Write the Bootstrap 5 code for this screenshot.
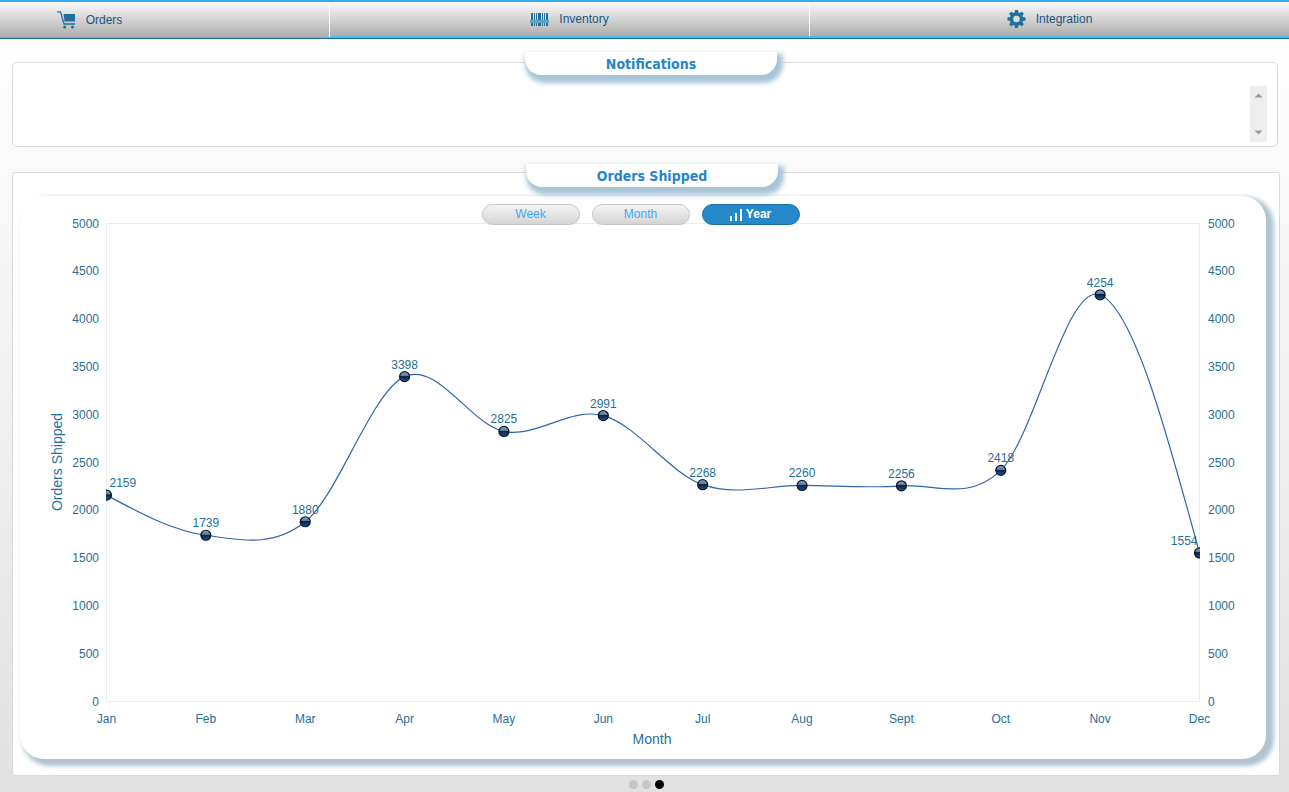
<!DOCTYPE html>
<html lang="en">
<head>
<meta charset="utf-8">
<meta name="viewport" content="width=device-width, initial-scale=1">
<title>Orders Shipped</title>
<link href="https://cdn.jsdelivr.net/npm/bootstrap@5.3.0/dist/css/bootstrap.min.css" rel="stylesheet">
<style>
  body { min-height: 100vh; font: 12px/16px "Liberation Sans", Arial, sans-serif; background: linear-gradient(#fff 40px, #e1e1e1) no-repeat; overflow-x: hidden; }
  .top-tabs { height: 39px; border-top: 2px solid #33abef; border-bottom: 1px solid #1b6e9c; background: #4dbdf0; overflow: hidden; }
  .top-tabs .strip { margin-left: -150px; height: 36px; }
  .top-tabs a { flex: 1 1 0; height: 34px; color: #1b5480; background: linear-gradient(#fafafa, #adadad); border-right: 1px solid #fff; gap: 10px; }
  .top-tabs a:last-child { border-right: 0; }
  .top-tabs a.current { height: 35px; padding-top: 1px; }
  .box { position: relative; background: #fff; border: 1px solid #d9d9d9; border-radius: 5px; margin-left: 12px; }
  .box-notes { margin-top: 23px; margin-right: 11px; padding: 23px 10px 4px; }
  .box-chart { margin-top: 25px; margin-right: 9px; padding: 23px 13px 16px 7px; border-radius: 3px; }
  .box-title { position: absolute; z-index: 2; left: 12px; right: 0; top: -11px; width: 252px; margin: 0 auto; height: 23px; font: bold 14px/24px "DejaVu Sans Condensed", Tahoma, sans-serif; color: #2585c7; text-align: center; background: #fff; border-radius: 0 0 16px 16px; box-shadow: 3px 5px 5px 3px #a6c5d7; }
  .box-chart .box-title { top: -9px; }
  .notes-list { height: 56px; }
  .scroller { width: 17px; background: #eee; padding: 6px 0; }
  .scroller button { border: 0; padding: 0; background: none; line-height: 0; }
  .chart-card { position: relative; background: #fff; border-radius: 24px; box-shadow: 5px 4px 4px 3px #b0c5d0; }
  .chart-card > svg { display: block; width: 100%; height: auto; }
  .ranges { position: absolute; z-index: 1; top: 8px; left: 0; right: 0; padding-right: 5px; gap: 12px; }
  .ranges .btn { width: 98px; height: 21px; padding: 0; font-size: 12px; line-height: 19px; border: 1px solid #c4c4c4; border-radius: 11px; color: #3fa9f5; background: linear-gradient(#f4f4f4, #d4d4d4); }
  .ranges .btn.chosen { color: #fff; font-weight: bold; background: #2588c8; border-color: #1a6fa5; }
  .ranges .btn svg { display: inline-block; width: 13px; height: 12px; vertical-align: -3px; }
  .axis { fill: #1f6f99; font-size: 12px; }
  .axis-title { font-size: 14px; }
  .pager { gap: 4px; padding: 4px 0 0 4px; }
  .pager button { width: 9px; height: 9px; padding: 0; border: 0; border-radius: 50%; background: #c3c7c9; }
  .pager button.now { background: #000; }
</style>
</head>
<body>
<nav class="top-tabs">
  <div class="strip d-flex align-items-start">
    <a href="#" class="current d-flex align-items-center justify-content-center text-decoration-none">
      <svg width="19" height="18" viewBox="0 0 19 18" fill="#1f719e"><path d="M6.500 3H18v7.500H7.500z"/><path d="M0 .8h3.500L7 13h11" fill="none" stroke="#1f719e" stroke-width="1.300"/><circle cx="7.700" cy="16" r="1.500"/><circle cx="15.500" cy="16" r="1.500"/></svg>
      <span>Orders</span>
    </a>
    <a href="#" class="d-flex align-items-center justify-content-center text-decoration-none">
      <svg width="19" height="13" viewBox="0 0 19 13"><path d="M1 0h2v13H1zM4 0h1v13H4zM6 0h1v13H6zM8 0h3v13H8zM12 0h1v13h-1zM14 0h1v13h-1zM16 0h2v13h-2z" fill="#1f719e"/><path d="M0 7h19v3H0z" fill="#68a1be"/></svg>
      <span>Inventory</span>
    </a>
    <a href="#" class="d-flex align-items-center justify-content-center text-decoration-none">
      <svg width="19" height="18" viewBox="0 0 18 18"><g fill="#1f719e"><path id="cog" d="M7 3 7.600 0h2.800L11 3v12l-.6 3H7.600L7 15z"/><use href="#cog" transform="rotate(45 9 9)"/><use href="#cog" transform="rotate(90 9 9)"/><use href="#cog" transform="rotate(135 9 9)"/><circle cx="9" cy="9" r="6.700"/></g><circle cx="9" cy="9" r="3.300" fill="#dcdcdc"/></svg>
      <span>Integration</span>
    </a>
  </div>
</nav>

<main>
  <section class="box box-notes">
    <h2 class="box-title">Notifications</h2>
    <div class="notes-list d-flex justify-content-end">
      <div class="scroller d-flex flex-column justify-content-between align-items-center">
        <button type="button" aria-label="Scroll up"><svg width="9" height="6"><path d="M.5 5.500h8l-4-4z" fill="#999"/></svg></button>
        <button type="button" aria-label="Scroll down"><svg width="9" height="6"><path d="M.5 .5h8l-4 4z" fill="#999"/></svg></button>
      </div>
    </div>
  </section>

  <section class="box box-chart">
    <h2 class="box-title">Orders Shipped</h2>
    <div class="chart-card">
      <div class="ranges d-flex justify-content-center">
        <button type="button" class="btn">Week</button>
        <button type="button" class="btn">Month</button>
        <button type="button" class="btn chosen"><svg viewBox="0 0 13 12"><path d="M0 7h2v5H0zM5 4h2v8H5zM10 0h2v12h-2z" fill="#fff"/></svg> Year</button>
      </div>
      <svg id="chart" viewBox="0 0 1246 563" role="img" aria-label="Orders shipped by month">
        <defs>
          <linearGradient id="ball" x1="0" y1="0" x2="0" y2="1"><stop offset="0" stop-color="#8fa6bf"/><stop offset=".42" stop-color="#5c7897"/><stop offset=".46" stop-color="#08203f"/><stop offset="1" stop-color="#1e5796"/></linearGradient>
          <clipPath id="plot"><path d="M86 20h1094v490H86z"/></clipPath>
          <clipPath id="labels"><path d="M0 0h1190v563H0z"/></clipPath>
        </defs>
        <path d="M86.500 27.500h1093v478h-1093z" fill="none" stroke="#ececec"/>
      </svg>
    </div>
  </section>

  <div class="pager d-flex justify-content-center">
    <button type="button" aria-label="Page 1"></button>
    <button type="button" aria-label="Page 2"></button>
    <button type="button" class="now" aria-label="Page 3"></button>
  </div>
</main>

<script src="https://cdn.jsdelivr.net/npm/bootstrap@5.3.0/dist/js/bootstrap.bundle.min.js"></script>
<script>
  const months = ['Jan','Feb','Mar','Apr','May','Jun','Jul','Aug','Sept','Oct','Nov','Dec'];
  const values = [2159,1739,1880,3398,2825,2991,2268,2260,2256,2418,4254,1554];
  const left = 86.5, right = 1179.5, bottom = 505.5, tall = 478, max = 5000;
  const step = (right - left) / (values.length - 1);
  const px = values.map((v, i) => left + i * step);
  const py = values.map(v => bottom - v / max * tall);
  const svg = document.getElementById('chart');
  function add(tag, attrs, text, parent) {
    const el = document.createElementNS('http://www.w3.org/2000/svg', tag);
    for (const k in attrs) el.setAttribute(k, attrs[k]);
    if (text !== undefined) el.textContent = text;
    (parent || svg).appendChild(el);
    return el;
  }
  // Catmull-Rom slopes, with natural (zero curvature) ends
  const n = py.length;
  const m = py.map((y, i) => (py[i + 1] - py[i - 1]) / 2);
  m[0] = (3 * (py[1] - py[0]) - m[1]) / 2;
  m[n - 1] = (3 * (py[n - 1] - py[n - 2]) - m[n - 2]) / 2;
  let path = `M${px[0]} ${py[0]}`;
  for (let i = 1; i < n; i++)
    path += `C${px[i-1] + step/3} ${py[i-1] + m[i-1]/3} ${px[i] - step/3} ${py[i] - m[i]/3} ${px[i]} ${py[i]}`;

  for (let v = 0; v <= max; v += 500) {
    const y = Math.round(bottom - v / max * tall) + 4;
    add('text', {x: 79, y, class: 'axis', 'text-anchor': 'end'}, v);
    add('text', {x: 1188, y, class: 'axis'}, v);
  }
  const line = add('g', {'clip-path': 'url(#plot)'});
  add('path', {d: path, fill: 'none', stroke: '#2f65ab', 'stroke-width': 1.2}, undefined, line);
  const names = add('g', {'clip-path': 'url(#labels)'});
  values.forEach((v, i) => {
    add('circle', {cx: px[i], cy: py[i], r: 5, fill: 'url(#ball)', stroke: '#07152b', 'stroke-width': 1.2}, undefined, line);
    const edge = i === 0 ? 'start' : i === n - 1 ? 'end' : 'middle';
    const x = edge === 'start' ? left + 3 : edge === 'end' ? right - 2 : px[i];
    add('text', {x, y: Math.round(py[i]) - 8, class: 'axis', 'text-anchor': edge}, v);
    add('text', {x: px[i], y: 527, class: 'axis', 'text-anchor': 'middle'}, months[i], names);
  });
  add('text', {x: 632, y: 548, class: 'axis axis-title', 'text-anchor': 'middle'}, 'Month');
  add('text', {x: 0, y: 0, class: 'axis axis-title', 'text-anchor': 'middle', transform: 'translate(42 266) rotate(-90)'}, 'Orders Shipped');
</script>
</body>
</html>
